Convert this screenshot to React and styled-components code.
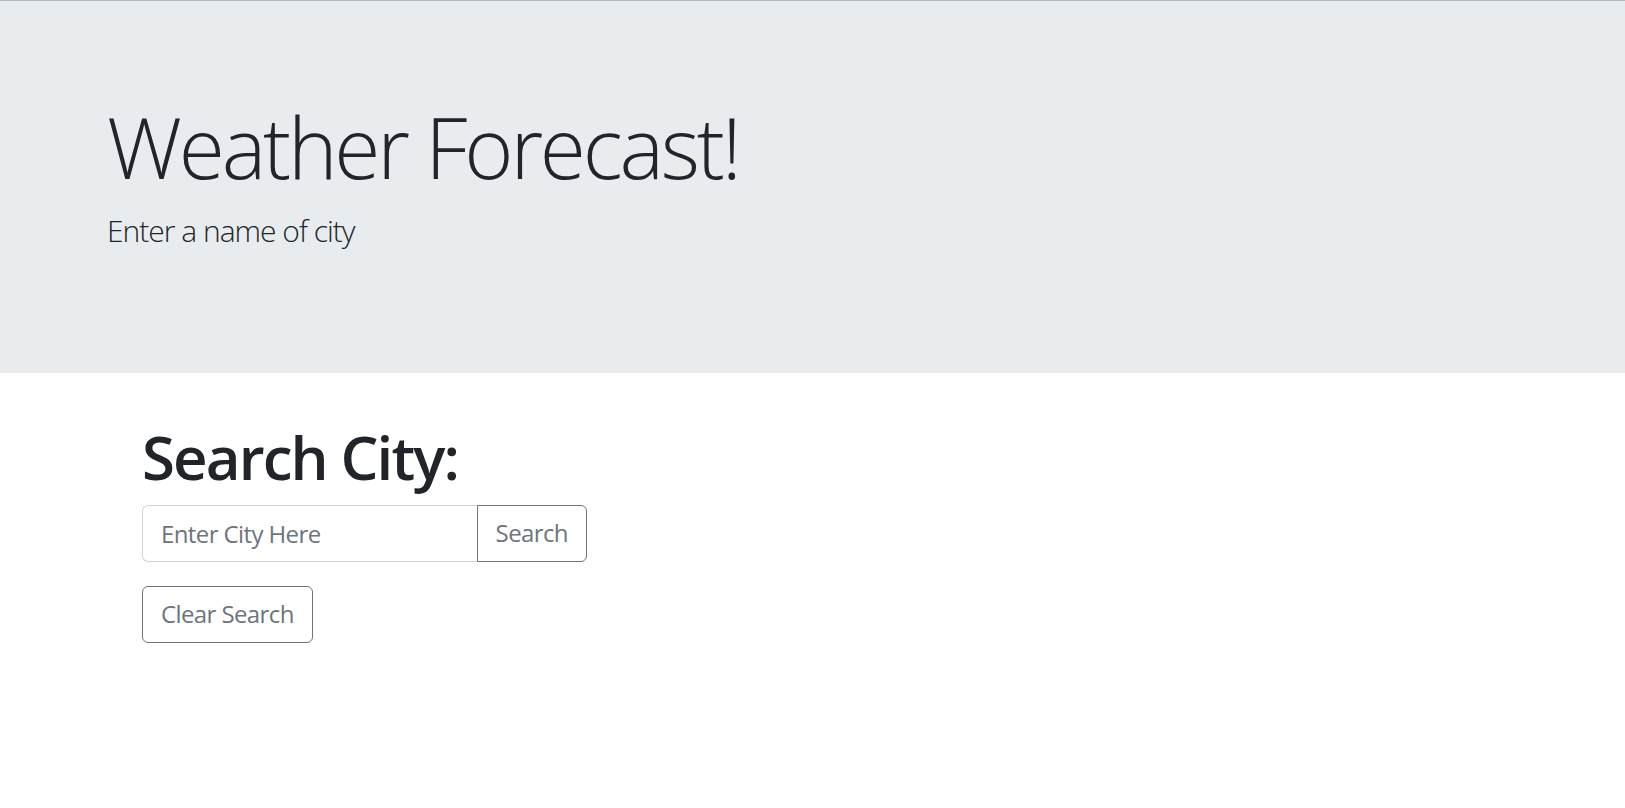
import React, { useState } from "react";
import styled, { createGlobalStyle } from "styled-components";

const GlobalStyle = createGlobalStyle`
  * { box-sizing: border-box; }
  body {
    margin: 0;
    background: #fff;
    color: #212529;
    font-family: "Open Sans", "Noto Sans", sans-serif;
  }
`;

export default function App() {
  const [city, setCity] = useState("");

  return (
    <Page>
      <GlobalStyle />
      <Jumbotron>
        <Display>Weather Forecast!</Display>
        <Lead>Enter a name of city</Lead>
      </Jumbotron>
      <SearchSection>
        <Heading>Search City:</Heading>
        <InputGroup>
          <CityInput
            type="text"
            placeholder="Enter City Here"
            value={city}
            onChange={(e) => setCity(e.target.value)}
          />
          <OutlineButton $attached>Search</OutlineButton>
        </InputGroup>
        <OutlineButton onClick={() => setCity("")}>Clear Search</OutlineButton>
      </SearchSection>
    </Page>
  );
}

const Page = styled.div`
  min-height: 100vh;
`;

const Jumbotron = styled.header`
  background-color: #e9ecef;
  border-top: 1px solid #b1b7bd;
  padding: 96px 107px 94px;
  margin-bottom: 48px;
`;

const Display = styled.h1`
  margin: 0 0 10px;
  font-size: 84px;
  font-weight: 300;
  line-height: 1.2;
  letter-spacing: -3.2px;
`;

const Lead = styled.p`
  margin: 0 0 26px;
  font-size: 30px;
  font-weight: 300;
  line-height: 1.5;
  letter-spacing: -1px;
`;

const SearchSection = styled.main`
  padding: 0 142px;
`;

const Heading = styled.h2`
  margin: 0 0 12px;
  font-size: 60px;
  font-weight: 600;
  line-height: 1.2;
  letter-spacing: -1.9px;
`;

const InputGroup = styled.div`
  display: flex;
  width: 445px;
  margin-bottom: 24px;
`;

const CityInput = styled.input`
  flex: 1;
  min-width: 0;
  height: 57px;
  padding: 9px 18px;
  font: inherit;
  font-size: 24px;
  letter-spacing: -0.6px;
  color: #495057;
  background: #fff;
  border: 1px solid #ced4da;
  border-right: none;
  border-radius: 6px 0 0 6px;
  outline: none;

  &::placeholder {
    color: #6c757d;
  }
`;

const OutlineButton = styled.button`
  height: 57px;
  padding: 9px 18px;
  font: inherit;
  font-size: 24px;
  line-height: 1.5;
  letter-spacing: -0.6px;
  color: #6c757d;
  background: transparent;
  border: 1px solid #6c757d;
  border-radius: ${(p) => (p.$attached ? "0 6px 6px 0" : "6px")};
  cursor: pointer;
`;
